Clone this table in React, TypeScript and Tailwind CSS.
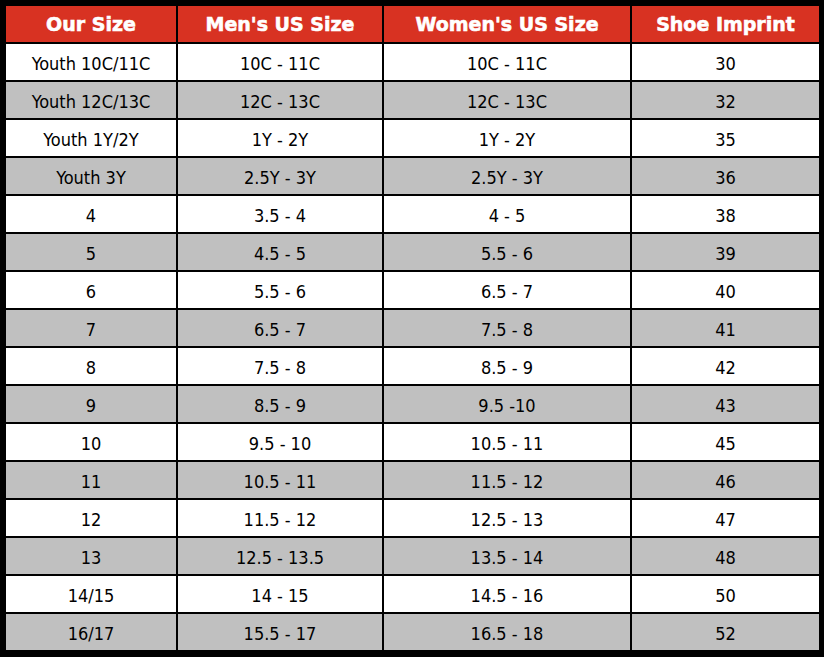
import React from "react";

const rows: string[][] = [
  ["Youth 10C/11C", "10C - 11C", "10C - 11C", "30"],
  ["Youth 12C/13C", "12C - 13C", "12C - 13C", "32"],
  ["Youth 1Y/2Y", "1Y - 2Y", "1Y - 2Y", "35"],
  ["Youth 3Y", "2.5Y - 3Y", "2.5Y - 3Y", "36"],
  ["4", "3.5 - 4", "4 - 5", "38"],
  ["5", "4.5 - 5", "5.5 - 6", "39"],
  ["6", "5.5 - 6", "6.5 - 7", "40"],
  ["7", "6.5 - 7", "7.5 - 8", "41"],
  ["8", "7.5 - 8", "8.5 - 9", "42"],
  ["9", "8.5 - 9", "9.5 -10", "43"],
  ["10", "9.5 - 10", "10.5 - 11", "45"],
  ["11", "10.5 - 11", "11.5 - 12", "46"],
  ["12", "11.5 - 12", "12.5 - 13", "47"],
  ["13", "12.5 - 13.5", "13.5 - 14", "48"],
  ["14/15", "14 - 15", "14.5 - 16", "50"],
  ["16/17", "15.5 - 17", "16.5 - 18", "52"],
];

const headers = ["Our Size", "Men's US Size", "Women's US Size", "Shoe Imprint"];

export default function App() {
  return (
    <div className="w-[824px] h-[657px] bg-black pt-[6px] pl-[6px] pr-[5px]">
      <div className="grid grid-cols-[170px_204px_246px_187px] auto-rows-[36px] gap-[2px]">
        {headers.map((h) => (
          <div
            key={h}
            className="bg-[#d83222] text-white flex items-center justify-center text-[19px] font-bold [-webkit-text-stroke:0.6px_white] pt-[1px]"
            style={{ fontFamily: "'DejaVu Sans', 'Liberation Sans', sans-serif" }}
          >
            {h}
          </div>
        ))}
        {rows.map((r, i) =>
          r.map((c, j) => (
            <div
              key={`${i}-${j}`}
              className={`${i % 2 === 0 ? "bg-white" : "bg-[#c0c0c0]"} text-black flex items-center justify-center text-[18px] pt-[3px]`}
              style={{ fontFamily: "'DejaVu Sans Condensed', 'Noto Sans', sans-serif" }}
            >
              {c}
            </div>
          ))
        )}
      </div>
    </div>
  );
}
